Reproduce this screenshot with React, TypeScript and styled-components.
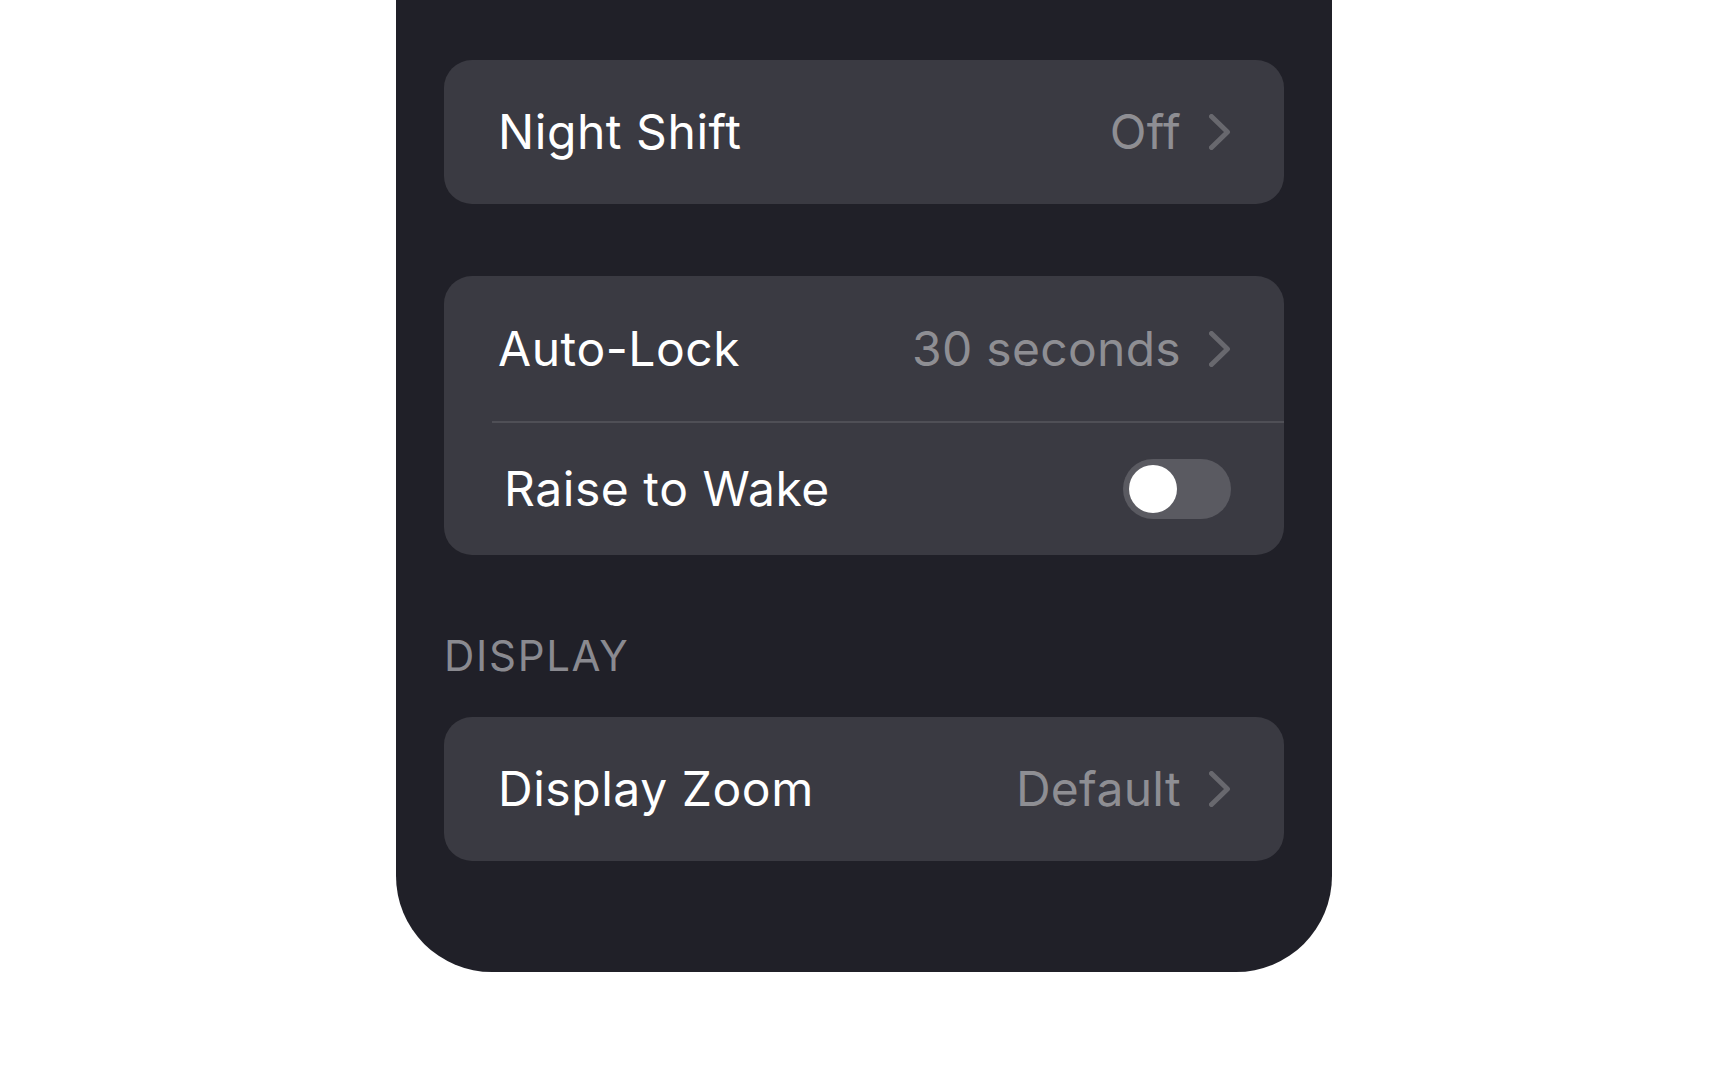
import React, { useState } from "react";
import styled, { createGlobalStyle } from "styled-components";

const GlobalStyle = createGlobalStyle`
  html, body {
    margin: 0;
    padding: 0;
    background: #ffffff;
  }
  body {
    font-family: Inter, "Noto Sans", "Liberation Sans", sans-serif;
    -webkit-font-smoothing: antialiased;
  }
`;

const Page = styled.div`
  display: flex;
  justify-content: center;
  min-height: 1080px;
`;

const Phone = styled.div`
  width: 936px;
  box-sizing: border-box;
  background: #202028;
  border-radius: 0 0 96px 96px;
  padding: 60px 48px 111px;
  display: flex;
  flex-direction: column;
  height: 972px;
`;

const Card = styled.div<{ $gap?: number }>`
  background: #3a3a42;
  border-radius: 28px;
  display: flex;
  flex-direction: column;
  margin-top: ${(p) => p.$gap ?? 0}px;
  overflow: hidden;
`;

const Row = styled.div<{ $height: number; $indent: number }>`
  height: ${(p) => p.$height}px;
  display: flex;
  align-items: center;
  justify-content: space-between;
  padding: 0 53px 0 ${(p) => p.$indent}px;
`;

const Separator = styled.div`
  height: 2px;
  margin-left: 48px;
  background: #4f4f56;
`;

const Label = styled.span`
  font-size: 48px;
  line-height: 58px;
  color: #ffffff;
  font-weight: 400;
  letter-spacing: 0.55px;
`;

const Value = styled.span`
  display: flex;
  align-items: center;
  gap: 28px;
  font-size: 48px;
  line-height: 58px;
  color: #8e8e93;
  font-weight: 400;
  letter-spacing: 0.3px;
`;

const SectionHeader = styled.div`
  margin-top: 77px;
  margin-bottom: 37px;
  font-size: 42px;
  line-height: 48px;
  letter-spacing: 1.7px;
  text-transform: uppercase;
  color: #8a8a90;
`;

const Toggle = styled.button<{ $on: boolean }>`
  width: 108px;
  height: 60px;
  border: none;
  padding: 6px;
  border-radius: 30px;
  background: ${(p) => (p.$on ? "#34c759" : "#5a5a61")};
  display: flex;
  justify-content: ${(p) => (p.$on ? "flex-end" : "flex-start")};
  cursor: pointer;
`;

const Knob = styled.span`
  width: 48px;
  height: 48px;
  border-radius: 50%;
  background: #ffffff;
`;

const Chevron = () => (
  <svg width="22" height="36" viewBox="0 0 22 36" fill="none">
    <polyline
      points="2.5,2.5 18.5,18 2.5,33.5"
      stroke="#68686e"
      strokeWidth="5"
      strokeLinecap="round"
      strokeLinejoin="round"
    />
  </svg>
);

export default function App() {
  const [raise, setRaise] = useState(false);
  return (
    <>
      <GlobalStyle />
      <Page>
        <Phone>
          <Card>
            <Row $height={144} $indent={54}>
              <Label>Night Shift</Label>
              <Value>
                Off
                <Chevron />
              </Value>
            </Row>
          </Card>

          <Card $gap={72}>
            <Row $height={145} $indent={54}>
              <Label>Auto-Lock</Label>
              <Value>
                30 seconds
                <Chevron />
              </Value>
            </Row>
            <Separator />
            <Row $height={132} $indent={60}>
              <Label>Raise to Wake</Label>
              <Toggle $on={raise} onClick={() => setRaise(!raise)} aria-label="Raise to Wake">
                <Knob />
              </Toggle>
            </Row>
          </Card>

          <SectionHeader>Display</SectionHeader>

          <Card>
            <Row $height={144} $indent={54}>
              <Label>Display Zoom</Label>
              <Value>
                Default
                <Chevron />
              </Value>
            </Row>
          </Card>
        </Phone>
      </Page>
    </>
  );
}
